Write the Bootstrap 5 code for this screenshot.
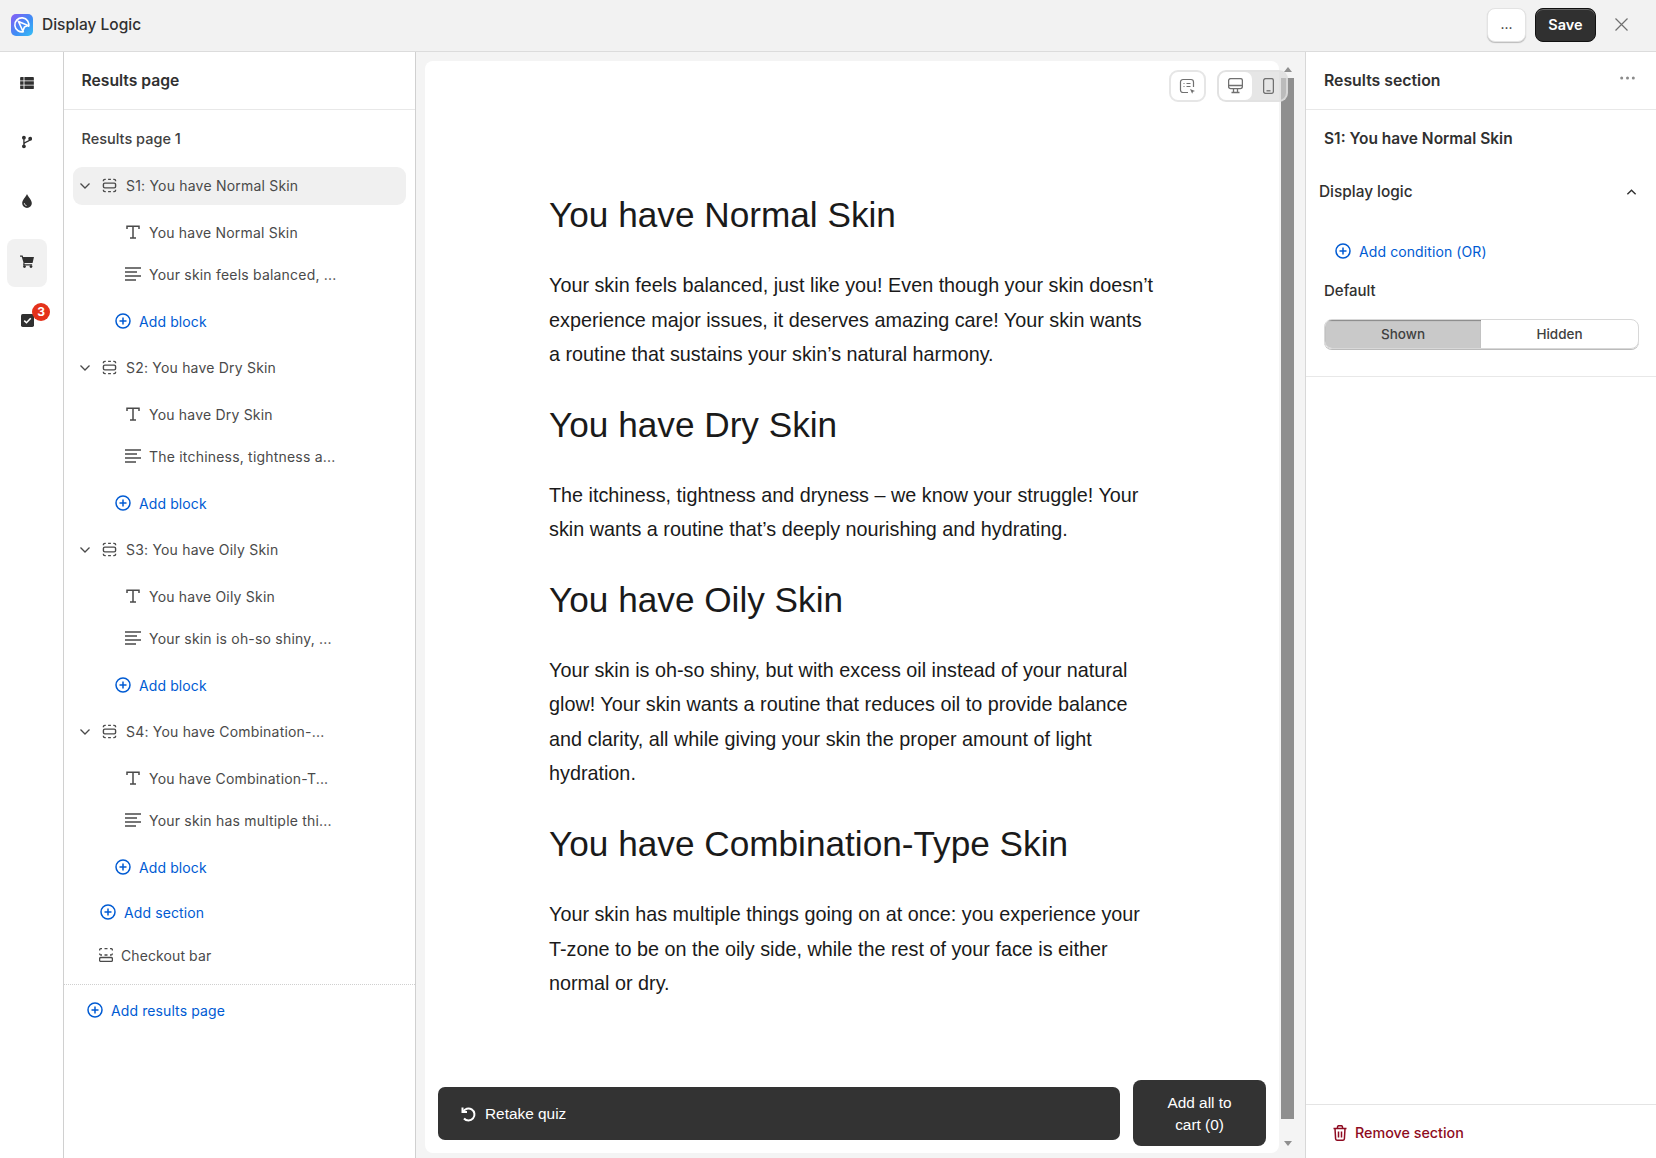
<!DOCTYPE html>
<html lang="en">
<head>
<meta charset="utf-8">
<title>Display Logic</title>
<link href="https://cdn.jsdelivr.net/npm/bootstrap@5.3.0/dist/css/bootstrap.min.css" rel="stylesheet">
<style>
html,body{height:100%;overflow:hidden}
body{font-family:Inter,"Liberation Sans",sans-serif;font-size:14px;color:#303030;background:#fff}
.topbar{height:52px;background:#f2f2f2;border-bottom:1px solid #dcdcdc;padding:0 28px 2px 11px}
.logo-tile{width:22px;height:22px;border-radius:5px;background:linear-gradient(135deg,#8a5cf6,#3f8cf5 55%,#35c0f5)}
.top-title{font-size:15.500px;font-weight:500;color:#303030;margin-left:9px}
.btn-more{width:39px;height:34px;background:#fff;border:1px solid #e3e3e3;border-radius:8px;box-shadow:0 1px 1px #bbb;font-size:14px;line-height:1;padding:0 0 2px;color:#303030}
.btn-save{width:61px;height:34px;background:#303030;color:#fff;border:1px solid #111;border-radius:8px;font-weight:600;font-size:14.500px;padding:0;box-shadow:inset 0 1px 0 #666;margin-left:9px}
.btn-save:hover{background:#303030;color:#fff}
.close-x{margin-left:19px}
.shell{height:1106px}
.rail{width:64px;flex:none;border-right:1px solid #d0d0d0;padding-top:7px}
.rail-item{width:40px;height:48px;border-radius:8px;margin:0 0 11px 7px;position:relative;display:flex;align-items:center;justify-content:center;color:#303030}
.rail-item.on{background:#f1f1f1;padding-bottom:4px;margin-bottom:9px}
.rail-item.pre{margin-bottom:14px}
.rail-badge{position:absolute;top:7px;right:-3px;width:18px;height:18px;background:#e4321b;color:#fff;border-radius:50%;font-size:12px;font-weight:700;line-height:18px;text-align:center}
.tree{width:352px;flex:none;border-right:1px solid #d0d0d0}
.panel-head{height:58px;border-bottom:1px solid #e8e8e8;padding:0 17.500px;font-size:15.700px;font-weight:600;color:#303030}
.page-name{font-size:14.500px;font-weight:500;height:57px;padding:0 17.500px;color:#404040}
.sec-row{height:38px;margin:0 9px 0 9px;border-radius:9px;padding:0 0 1px 6px;color:#4a4a4a;letter-spacing:.2px}
.sec-row.on{background:#f0f0f0}
.blk-row{height:42px;padding-left:61px;color:#4a4a4a;letter-spacing:.2px}
.blk-first{margin-top:6px}
.add-link{color:#005bd3;letter-spacing:.1px;height:44px}
.add-block{padding-left:51px;margin:4px 0 6px}
.add-block.last{margin-bottom:1px}
.add-section{padding-left:36px}
.add-page{padding-left:23px;margin-top:3px}
.add-cond{padding-left:29px;margin-top:13px}
.checkout-row{height:44px;padding-left:35px;margin-top:-1px;color:#4a4a4a;letter-spacing:.1px}
.dot-line{border-top:1px dotted #cfcfcf;margin-top:7px}
.ico-chev{width:12px;margin-right:11px}
.ico-sec{width:15px;margin-right:9px}
.ico-blk{width:16px;margin-right:8px}
.preview{background:#f4f4f4;padding:9px 0 5px 9px;flex:1;min-width:0;display:flex}
.sheet{background:#fff;border-radius:8px;width:854px;height:1092px;padding-top:133px;position:relative;flex:none}
.copy{width:607px;margin-left:124px;color:#1a1a1a;font-family:"Liberation Sans",Arial,sans-serif}
.copy h2{font-size:35.200px;font-weight:400;font-family:inherit;line-height:42px;margin:0 0 32px}
.copy p{font-size:19.800px;line-height:34.500px;margin:0 0 32.200px}
.tool{position:absolute;top:9px;height:32px;border:2px solid #e6e6e6;border-radius:9px;background:#fff;display:flex;align-items:center;justify-content:center}
.tool-a{left:744px;width:37px}
.tool-b{left:792px;width:71px;background:rgba(214,214,214,.62);border-color:rgba(226,226,226,.75);justify-content:flex-start}
.tool-on{width:33px;height:28px;background:#fff;border-radius:7px;display:flex;align-items:center;justify-content:center}
.tool-off{width:33px;display:flex;justify-content:center}
.bottom-row{position:absolute;left:13px;right:13px;bottom:7px;display:flex;align-items:flex-end;gap:13px;font-family:"Liberation Sans",Arial,sans-serif}
.retake{flex:1;height:53px;background:#333;border-radius:7px;color:#fff;font-size:15.400px;padding:0 22px;margin-bottom:6px;border:0}
.retake svg{margin-right:9px}
.addcart{width:133px;height:66px;background:#333;border-radius:8px;color:#fff;font-size:15.400px;line-height:22px;border:0;padding:1px 30px 0}
.scroll-col{width:25px;flex:none;display:flex;flex-direction:column;margin-top:6px;padding-left:2px}
.thumb{width:13px;height:1041px;background:#8f8f8f;margin-top:6px}
.arr-up,.arr-dn{width:0;height:0;border-left:4px solid transparent;border-right:4px solid transparent;margin-left:3px}
.arr-up{border-bottom:5px solid #8f8f8f}
.arr-dn{border-top:5px solid #8f8f8f;margin-top:22px}
.side{width:351px;flex:none;border-left:1px solid #d8d8d8;display:flex;flex-direction:column}
.side-head{height:58px;border-bottom:1px solid #e8e8e8;padding:0 21px 0 18px;font-size:15.800px;font-weight:600}
.side-head svg{margin-top:-6px}
.side-name{font-size:15.500px;font-weight:600;height:58px;padding:0 18px;color:#303030}
.logic-head{height:48px;padding:0 19px 0 13px;font-size:15.400px;font-weight:500}
.default-label{font-size:15px;font-weight:500;padding:0 18px;margin:8px 0 18px;line-height:20px}
.seg{margin:0 17px 0 18px;height:30px;border:1px solid #d8d8d8;border-radius:8px;overflow:hidden;box-shadow:0 1px 0 #bbb}
.seg span{flex:1;display:flex;align-items:center;justify-content:center;font-size:13.500px;font-weight:500;color:#404040}
.seg .sel{background:#c9c9c9;flex:0 0 156px;box-shadow:inset 0 1px 1px #888}
.side-rule{border-bottom:1px solid #e8e8e8;height:28px}
.remove{margin-top:auto;height:54px;border-top:1px solid #e4e4e4;color:#8e0b21;font-size:14.300px;font-weight:500;padding:3px 0 0 27px}
</style>
</head>
<body>
<div class="topbar d-flex align-items-center">
  <span class="logo-tile d-flex align-items-center justify-content-center"><svg width="18" height="18" viewBox="0 0 18 18" fill="none" stroke="#fff" stroke-width="1.600"><path d="M15.500 11A7 7 0 1 0 11 15.500"/><path d="M5.500 5.500l9.500 4-3.600 1.600L9.800 15z"/></svg></span>
  <span class="top-title">Display Logic</span>
  <button class="btn btn-more ms-auto">...</button>
  <button class="btn btn-save">Save</button>
  <svg class="close-x" width="13" height="13" viewBox="0 0 13 13" stroke="#707070" stroke-width="1.200"><path d="M.5.5l12 12M12.500.5l-12 12"/></svg>
</div>
<div class="shell d-flex">
  <div class="rail">
    <div class="rail-item"><svg width="14" height="12" viewBox="0 0 16 14" fill="#303030"><path d="M1 0h3v4H0V1a1 1 0 0 1 1-1zM5 0h10a1 1 0 0 1 1 1v3H5zM0 5h4v4H0zM5 5h11v4H5zM0 10h4v4H1a1 1 0 0 1-1-1zM5 10h11v3a1 1 0 0 1-1 1H5z"/></svg></div>
    <div class="rail-item"><svg width="10" height="14" viewBox="0 0 12 15" fill="none" stroke="#303030" stroke-width="1.600"><circle cx="2.300" cy="2.300" r="1.500" fill="#303030"/><circle cx="2.300" cy="12.700" r="1.500" fill="#303030"/><circle cx="9.800" cy="3.600" r="1.500" fill="#303030"/><path d="M2.300 3v9M2.300 10c0-3.500 7.500-2.500 7.500-6"/></svg></div>
    <div class="rail-item pre"><svg width="10" height="14" viewBox="0 0 11 16" fill="#303030"><path d="M5.500 0C4.500 3 0 6.500 0 10.500a5.500 5.500 0 0 0 11 0C11 6.500 6.500 3 5.500 0z"/><path d="M2.500 10.500c0 1.500 1 2.500 2.500 2.800" stroke="#fff" stroke-width="1" fill="none"/></svg></div>
    <div class="rail-item on"><svg width="14" height="13" viewBox="0 0 15 14" fill="#303030"><path d="M0 .5h2.800l.5 1.700H15l-1.500 6.500H4.700L5 10h8v1.300H3.300l.4-3.100L1.800 1.900H0z"/><circle cx="4.800" cy="12.500" r="1.500"/><circle cx="11.800" cy="12.500" r="1.500"/></svg></div>
    <div class="rail-item"><svg width="13" height="13" viewBox="0 0 14 14"><rect width="14" height="14" rx="1.800" fill="#303030"/><path d="M3.500 7.200l2.400 2.200 4.600-4.800" fill="none" stroke="#fff" stroke-width="1.700"/></svg><span class="rail-badge">3</span></div>
  </div>

  <div class="tree">
    <svg width="0" height="0" class="d-block position-absolute"><defs>
      <symbol id="i-chev" viewBox="0 0 12 8"><path d="M1.500 1.500L6 6l4.500-4.500" fill="none" stroke="#4a4a4a" stroke-width="1.300"/></symbol>
      <symbol id="i-sec" viewBox="0 0 16 16"><g fill="none" stroke="#4a4a4a" stroke-width="1.500"><rect x="1.500" y="5.500" width="13" height="5" rx="1.500"/><path d="M1.500 3.500v-.5a1.500 1.500 0 0 1 1.500-1.500h1M6.500 1.500h3M12 1.500h1A1.500 1.500 0 0 1 14.500 3v.5M1.500 12.500v.5A1.500 1.500 0 0 0 3 14.500h1M6.500 14.500h3M12 14.500h1a1.500 1.500 0 0 0 1.500-1.500v-.5"/></g></symbol>
      <symbol id="i-t" viewBox="0 0 16 14"><path d="M2 4V1.200h12V4M8 1.200V13M5 13h6" fill="none" stroke="#4a4a4a" stroke-width="1.500"/></symbol>
      <symbol id="i-par" viewBox="0 0 16 14"><path d="M0 1h16M0 5h12M0 9h16M0 13h11" fill="none" stroke="#4a4a4a" stroke-width="1.300"/></symbol>
      <symbol id="i-plus" viewBox="0 0 16 16"><g fill="none" stroke="#005bd3" stroke-width="1.500"><circle cx="8" cy="8" r="7"/><path d="M8 4.500v7M4.500 8h7"/></g></symbol>
    </defs></svg>
    <div class="panel-head d-flex align-items-center">Results page</div>
    <div class="page-name d-flex align-items-center">Results page 1</div>

    <div class="sec-row on d-flex align-items-center"><svg class="ico-chev" height="8"><use href="#i-chev"/></svg><svg class="ico-sec" height="15"><use href="#i-sec"/></svg>S1: You have Normal Skin</div>
    <div class="blk-row blk-first d-flex align-items-center"><svg class="ico-blk" height="14"><use href="#i-t"/></svg>You have Normal Skin</div>
    <div class="blk-row d-flex align-items-center"><svg class="ico-blk" height="14"><use href="#i-par"/></svg>Your skin feels balanced, ...</div>
    <div class="add-link add-block d-flex align-items-center"><svg width="16" height="16" class="me-2"><use href="#i-plus"/></svg>Add block</div>

    <div class="sec-row d-flex align-items-center"><svg class="ico-chev" height="8"><use href="#i-chev"/></svg><svg class="ico-sec" height="15"><use href="#i-sec"/></svg>S2: You have Dry Skin</div>
    <div class="blk-row blk-first d-flex align-items-center"><svg class="ico-blk" height="14"><use href="#i-t"/></svg>You have Dry Skin</div>
    <div class="blk-row d-flex align-items-center"><svg class="ico-blk" height="14"><use href="#i-par"/></svg>The itchiness, tightness a...</div>
    <div class="add-link add-block d-flex align-items-center"><svg width="16" height="16" class="me-2"><use href="#i-plus"/></svg>Add block</div>

    <div class="sec-row d-flex align-items-center"><svg class="ico-chev" height="8"><use href="#i-chev"/></svg><svg class="ico-sec" height="15"><use href="#i-sec"/></svg>S3: You have Oily Skin</div>
    <div class="blk-row blk-first d-flex align-items-center"><svg class="ico-blk" height="14"><use href="#i-t"/></svg>You have Oily Skin</div>
    <div class="blk-row d-flex align-items-center"><svg class="ico-blk" height="14"><use href="#i-par"/></svg>Your skin is oh-so shiny, ...</div>
    <div class="add-link add-block d-flex align-items-center"><svg width="16" height="16" class="me-2"><use href="#i-plus"/></svg>Add block</div>

    <div class="sec-row d-flex align-items-center"><svg class="ico-chev" height="8"><use href="#i-chev"/></svg><svg class="ico-sec" height="15"><use href="#i-sec"/></svg>S4: You have Combination-...</div>
    <div class="blk-row blk-first d-flex align-items-center"><svg class="ico-blk" height="14"><use href="#i-t"/></svg>You have Combination-T...</div>
    <div class="blk-row d-flex align-items-center"><svg class="ico-blk" height="14"><use href="#i-par"/></svg>Your skin has multiple thi...</div>
    <div class="add-link add-block last d-flex align-items-center"><svg width="16" height="16" class="me-2"><use href="#i-plus"/></svg>Add block</div>
    <div class="add-link add-section d-flex align-items-center"><svg width="16" height="16" class="me-2"><use href="#i-plus"/></svg>Add section</div>
    <div class="checkout-row d-flex align-items-center"><svg width="14" height="14" viewBox="0 0 14 14" fill="none" stroke="#4a4a4a" stroke-width="1.300" class="me-2"><path d="M.6 2.500V2A1.400 1.400 0 0 1 2 .6h1M5.500.6h3M11 .6h1A1.400 1.400 0 0 1 13.400 2v.5M.6 5.500c0 1 .6 1.500 1.400 1.500h1M5.500 7h3M11 7h1c.8 0 1.400-.5 1.400-1.500"/><rect x=".6" y="9.500" width="12.800" height="4" rx="1.300"/></svg>Checkout bar</div>
    <div class="dot-line"></div>
    <div class="add-link add-page d-flex align-items-center"><svg width="16" height="16" class="me-2"><use href="#i-plus"/></svg>Add results page</div>
  </div>

  <div class="preview">
    <div class="sheet">
      <div class="tool tool-a"><svg width="17" height="17" viewBox="0 0 17 17" fill="none" stroke="#707070" stroke-width="1.200"><path d="M9 14.500H4A2.500 2.500 0 0 1 1.500 12V4A2.500 2.500 0 0 1 4 1.500h8A2.500 2.500 0 0 1 14.500 4v5"/><path d="M4.500 5.500h1M7.500 5.500h4M4.500 8.500h1M7.500 8.500h4"/><path d="M11 11l5 2-2 .8-.8 2z" fill="#707070" stroke="none"/></svg></div>
      <div class="tool tool-b"><span class="tool-on"><svg width="15" height="16" viewBox="0 0 15 16" fill="none" stroke="#707070" stroke-width="1.300"><rect x=".6" y=".6" width="13.800" height="10" rx="2"/><path d="M.6 7.500h13.800M5.500 10.600v3.500M9.500 10.600v3.500M3.500 14.500h8"/></svg></span><span class="tool-off"><svg width="11" height="16" viewBox="0 0 11 16" fill="none" stroke="#707070" stroke-width="1.300"><rect x=".6" y=".6" width="9.800" height="14.800" rx="2"/><path d="M3.500 12.800h4"/></svg></span></div>
      <div class="copy">
        <h2>You have Normal Skin</h2>
        <p>Your skin feels balanced, just like you! Even though your skin doesn’t experience major issues, it deserves amazing care! Your skin wants a routine that sustains your skin’s natural harmony.</p>
        <h2>You have Dry Skin</h2>
        <p>The itchiness, tightness and dryness – we know your struggle! Your skin wants a routine that’s deeply nourishing and hydrating.</p>
        <h2>You have Oily Skin</h2>
        <p>Your skin is oh-so shiny, but with excess oil instead of your natural glow! Your skin wants a routine that reduces oil to provide balance and clarity, all while giving your skin the proper amount of light hydration.</p>
        <h2>You have Combination-Type Skin</h2>
        <p>Your skin has multiple things going on at once: you experience your T-zone to be on the oily side, while the rest of your face is either normal or dry.</p>
      </div>
      <div class="bottom-row">
        <button class="retake d-flex align-items-center"><svg width="16" height="16" viewBox="0 0 16 16" fill="none" stroke="#fff" stroke-width="2"><path d="M2.500 1.500v4.500H7"/><path d="M3 6a6 6 0 1 1 1 6.500"/></svg>Retake quiz</button>
        <button class="addcart">Add all to cart (0)</button>
      </div>
    </div>
    <div class="scroll-col"><div class="arr-up"></div><div class="thumb"></div><div class="arr-dn"></div></div>
  </div>

  <div class="side">
    <div class="side-head d-flex align-items-center justify-content-between">Results section<svg width="15" height="4" viewBox="0 0 15 4" fill="#8a8a8a"><circle cx="1.700" cy="2" r="1.500"/><circle cx="7.500" cy="2" r="1.500"/><circle cx="13.300" cy="2" r="1.500"/></svg></div>
    <div class="side-name d-flex align-items-center">S1: You have Normal Skin</div>
    <div class="logic-head d-flex align-items-center justify-content-between">Display logic<svg width="11" height="8" viewBox="0 0 12 8"><path d="M1.500 6.500L6 2l4.500 4.500" fill="none" stroke="#303030" stroke-width="1.500"/></svg></div>
    <div class="add-link add-cond d-flex align-items-center"><svg width="16" height="16" class="me-2"><use href="#i-plus"/></svg>Add condition (OR)</div>
    <div class="default-label">Default</div>
    <div class="seg d-flex"><span class="sel">Shown</span><span>Hidden</span></div>
    <div class="side-rule"></div>
    <div class="remove d-flex align-items-center"><svg width="14" height="16" viewBox="0 0 14 16" fill="none" stroke="#8e0b21" stroke-width="1.500" class="me-2"><path d="M.5 3.500h13M4.500 3.500V2A1.300 1.300 0 0 1 5.800.7h2.400A1.300 1.300 0 0 1 9.500 2v1.500M2 3.500l.6 10.200A1.500 1.500 0 0 0 4 15.200h6a1.500 1.500 0 0 0 1.400-1.500L12 3.500M5.500 6.500v6M8.500 6.500v6"/></svg>Remove section</div>
  </div>
</div>
</body>
</html>
